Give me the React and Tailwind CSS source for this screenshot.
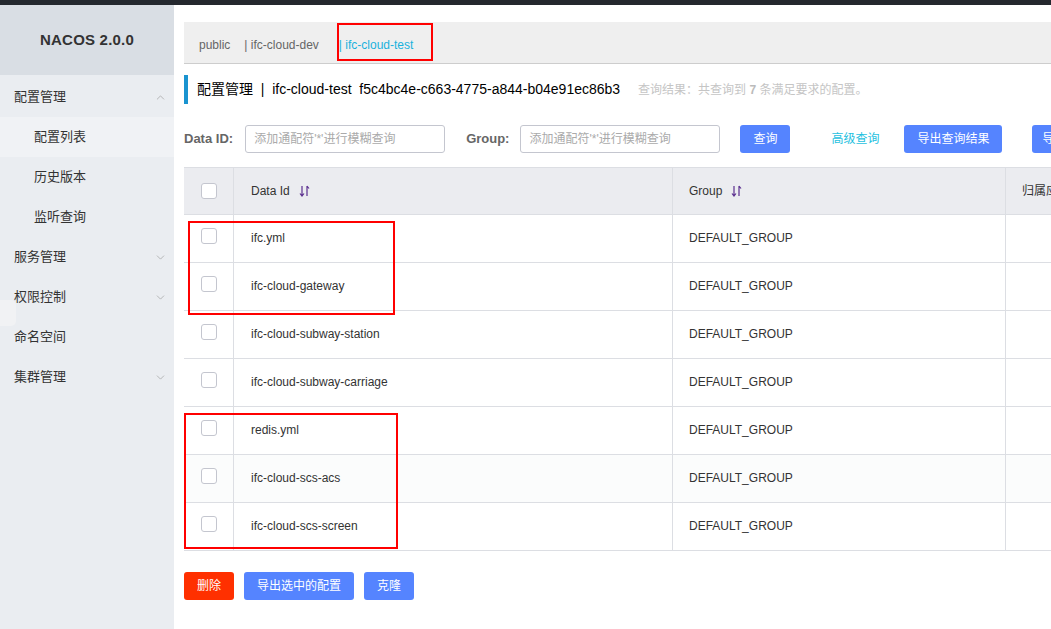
import { ChevronDown, ChevronUp } from 'lucide-react';

const rows = [
    'ifc.yml',
    'ifc-cloud-gateway',
    'ifc-cloud-subway-station',
    'ifc-cloud-subway-carriage',
    'redis.yml',
    'ifc-cloud-scs-acs',
    'ifc-cloud-scs-screen',
];

function SortIcon() {
    return (
        <svg width="11" height="12" viewBox="0 0 11 12" className="ml-[9px]">
            <path d="M3 1v10M1 8.5l2 2.5 2-2.5" stroke="#5b2f8f" strokeWidth="1.2" fill="none" />
            <path d="M8 11V1M8 1l2 2.5" stroke="#5b2f8f" strokeWidth="1.2" fill="none" />
        </svg>
    );
}

function Checkbox() {
    return <div className="w-4 h-4 rounded-[3px] border border-[#c4c6cf] bg-white" />;
}

function MenuItem({ label, sub, open, active, arrow }) {
    return (
        <div
            className={`h-10 flex items-center justify-between pr-[7px] text-[13px] text-[#333] ${sub ? 'pl-[34px]' : 'pl-[14px]'} ${active ? 'bg-[#f0f2f5]' : ''}`}
        >
            <span>{label}</span>
            {arrow && (open
                ? <ChevronUp size={13} strokeWidth={1.2} color="#999" />
                : <ChevronDown size={13} strokeWidth={1.2} color="#999" />)}
        </div>
    );
}

export default function App() {
    return (
        <div className="h-[629px] w-[1051px] overflow-hidden flex flex-col bg-white font-['Liberation_Sans','Noto_Sans_CJK_SC',sans-serif] relative">
            <div className="h-[5px] bg-[#24282e] shrink-0" />
            <div className="flex flex-1 min-h-0">
                {/* Sidebar */}
                <div className="w-[174px] shrink-0 bg-[#eaedf1] flex flex-col">
                    <div className="h-[70px] bg-[#d9dee4] flex items-center justify-center">
                        <span className="font-bold text-[15px] text-[#333] tracking-[0.2px]">NACOS 2.0.0</span>
                    </div>
                    <div className="pt-[2px]">
                        <MenuItem label="配置管理" arrow open />
                        <MenuItem label="配置列表" sub active />
                        <MenuItem label="历史版本" sub />
                        <MenuItem label="监听查询" sub />
                        <MenuItem label="服务管理" arrow />
                        <MenuItem label="权限控制" arrow />
                        <MenuItem label="命名空间" />
                        <MenuItem label="集群管理" arrow />
                    </div>
                </div>

                {/* Main */}
                <div className="flex-1 min-w-0 pl-[10px] pt-[17px] overflow-hidden">
                    {/* Namespace tabs */}
                    <div className="relative h-[42px] bg-[#efefef] border-b border-[#cdcdcd] flex items-center pt-[4px] pl-[15px] text-[12px] text-[#666] whitespace-nowrap">
                        <span>public</span>
                        <span className="ml-[14px]">| ifc-cloud-dev</span>
                        <span className="ml-[20px] text-[#19b2dd]">| ifc-cloud-test</span>
                        <div className="absolute left-[153px] top-[1px] w-[96px] h-[38px] border-2 border-[#ff0000]" />
                    </div>

                    {/* Title */}
                    <div className="mt-[11px] h-[29px] border-l-4 border-[#1a94d0] flex items-center pl-[9px] whitespace-nowrap">
                        <span className="text-[14px] text-black">配置管理 &nbsp;|&nbsp; ifc-cloud-test&nbsp; f5c4bc4e-c663-4775-a844-b04e91ec86b3</span>
                        <span className="ml-[18px] text-[12px] text-[#c5c5c5]">查询结果：共查询到 <b className="text-[#bbb]">7</b> 条满足要求的配置。</span>
                    </div>

                    {/* Search row */}
                    <div className="mt-[21px] h-[28px] flex items-center whitespace-nowrap">
                        <span className="shrink-0 text-[13px] font-bold text-[#666]">Data ID:</span>
                        <div className="shrink-0 ml-[12px] w-[200px] h-[28px] border border-[#c4c6cf] rounded-[3px] flex items-center px-[8px] text-[12px] text-[#aaa]">添加通配符'*'进行模糊查询</div>
                        <span className="shrink-0 ml-[21px] text-[13px] font-bold text-[#666]">Group:</span>
                        <div className="shrink-0 ml-[11px] w-[200px] h-[28px] border border-[#c4c6cf] rounded-[3px] flex items-center px-[8px] text-[12px] text-[#aaa]">添加通配符'*'进行模糊查询</div>
                        <button className="shrink-0 ml-[20px] w-[50px] h-[28px] rounded-[3px] bg-[#5584ff] text-white text-[12px]">查询</button>
                        <span className="shrink-0 ml-[41px] text-[12px] text-[#1fc1e0]">高级查询</span>
                        <button className="shrink-0 ml-[25px] w-[98px] h-[28px] rounded-[3px] bg-[#5584ff] text-white text-[12px]">导出查询结果</button>
                        <button className="shrink-0 ml-[30px] w-[74px] h-[28px] rounded-[3px] bg-[#5584ff] text-white text-[12px] text-left pl-[10px]">导入配置</button>
                    </div>

                    {/* Table */}
                    <div className="relative mt-[14px] w-[1000px]">
                        <div className="flex h-[48px] bg-[#ebecf0] border-y border-[#dcdee3] text-[12px] text-[#333]">
                            <div className="w-[50px] shrink-0 flex items-center justify-center border-r border-[#dcdee3]"><Checkbox /></div>
                            <div className="w-[439px] shrink-0 flex items-center pl-[17px] border-r border-[#dcdee3]">Data Id <SortIcon /></div>
                            <div className="w-[333px] shrink-0 flex items-center pl-[16px] border-r border-[#dcdee3]">Group <SortIcon /></div>
                            <div className="flex-1 flex items-center pl-[16px] whitespace-nowrap">归属应用</div>
                        </div>
                        {rows.map((name, i) => (
                            <div key={name} className={`flex h-[48px] border-b border-[#dcdee3] text-[12px] text-[#333] ${i === 5 ? 'bg-[#fbfcfc]' : 'bg-white'}`}>
                                <div className="w-[50px] shrink-0 flex items-center justify-center border-r border-[#dcdee3] -mt-[5px]"><Checkbox /></div>
                                <div className="w-[439px] shrink-0 flex items-center pl-[17px] border-r border-[#dcdee3] -mt-[2px]">{name}</div>
                                <div className="w-[333px] shrink-0 flex items-center pl-[16px] border-r border-[#dcdee3] -mt-[2px]">DEFAULT_GROUP</div>
                                <div className="flex-1" />
                            </div>
                        ))}
                        <div className="absolute left-[4px] top-[54px] w-[207px] h-[94px] border-2 border-[#ff0000]" />
                        <div className="absolute left-0 top-[246px] w-[214px] h-[136px] border-2 border-[#ff0000]" />
                    </div>

                    {/* Bottom actions */}
                    <div className="mt-[21px] flex gap-[10px] whitespace-nowrap">
                        <button className="w-[50px] h-[28px] rounded-[3px] bg-[#ff3000] text-white text-[12px]">删除</button>
                        <button className="w-[110px] h-[28px] rounded-[3px] bg-[#5584ff] text-white text-[12px]">导出选中的配置</button>
                        <button className="w-[50px] h-[28px] rounded-[3px] bg-[#5584ff] text-white text-[12px]">克隆</button>
                    </div>
                </div>
            </div>
            <div className="absolute left-[-12px] top-[300px] w-[28px] h-[26px] rounded-[5px] bg-[#f1f2f4]" />
        </div>
    );
}
